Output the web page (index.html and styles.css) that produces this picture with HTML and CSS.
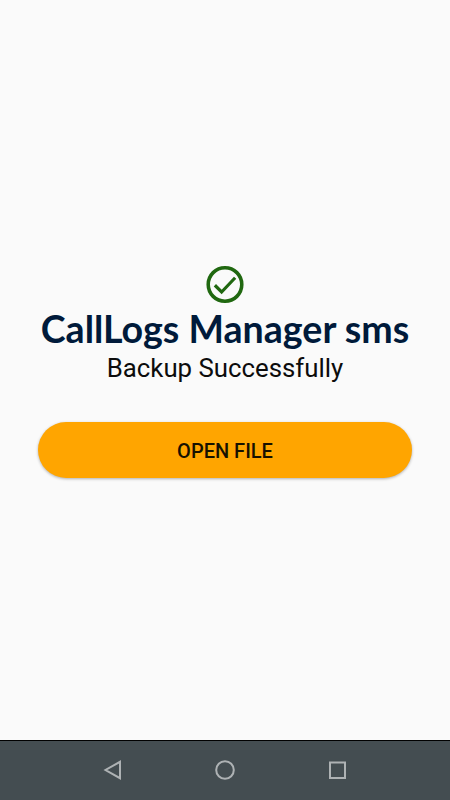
FILE: index.html
```html
<!DOCTYPE html>
<html lang="en">
<head>
    <meta charset="UTF-8">
    <meta name="viewport" content="width=device-width, initial-scale=1.0">
    <title>CallLogs Manager sms</title>
    <link rel="stylesheet" href="styles.css">
</head>
<body>
    <main class="content">
        <svg class="check-icon" viewBox="0 0 24 24">
            <circle cx="12" cy="12" r="8.950"/>
            <path class="check-mark" d="M6.600 12.400L10.200 16L17.400 8.400"/>
        </svg>
        <h1 class="title">CallLogs Manager sms</h1>
        <p class="message">Backup Successfully</p>
        <button class="open-button" type="button">OPEN FILE</button>
    </main>
    <nav class="nav-bar">
        <svg class="nav-icon" viewBox="0 0 24 24"><path d="M19 3.800V20.200L4.500 12z"/></svg>
        <svg class="nav-icon" viewBox="0 0 24 24"><circle cx="12" cy="12" r="8.800"/></svg>
        <svg class="nav-icon" viewBox="0 0 24 24"><rect x="5" y="4.500" width="15" height="15.500"/></svg>
    </nav>
</body>
</html>
```
FILE: styles.css
```css
body {
    display: flex;
    flex-direction: column;
    height: 100vh;
    margin: 0;
    background-color: #fafafa;
    font-family: Roboto, sans-serif;
    overflow: hidden;
}
.content {
    display: flex;
    flex: 1;
    flex-direction: column;
    align-items: center;
    padding: 262px 37px 0;
}
.check-icon {
    width: 46px;
    height: 45px;
    fill: none;
    stroke: #206810;
    stroke-width: 1.9;
}
.check-mark {
    stroke-width: 1.7;
}
.title {
    margin: -1px 0 0;
    color: #001a3a;
    font-family: Lato, sans-serif;
    font-size: 37.6px;
    font-weight: bold;
    line-height: 45px;
    white-space: nowrap;
}
.message {
    margin: 1px 0 0;
    color: #0c0c0c;
    font-size: 25.8px;
    line-height: 32px;
}
.open-button {
    width: 374px;
    height: 56px;
    margin-top: 38px;
    padding: 1px 0 0;
    border: none;
    border-radius: 28px;
    background-color: #ffa500;
    box-shadow: 0 1px 3px rgba(0, 0, 0, 0.3);
    color: #171100;
    font-family: Roboto, sans-serif;
    font-size: 20px;
    font-weight: 500;
}
.nav-bar {
    display: flex;
    justify-content: center;
    align-items: center;
    gap: 88px;
    box-sizing: border-box;
    height: 60px;
    padding-bottom: 1px;
    border-top: 1px solid #000;
    background-color: #444d51;
}
.nav-icon {
    width: 24px;
    height: 24px;
    fill: none;
    stroke: #aeb2b4;
    stroke-width: 2;
}
```
